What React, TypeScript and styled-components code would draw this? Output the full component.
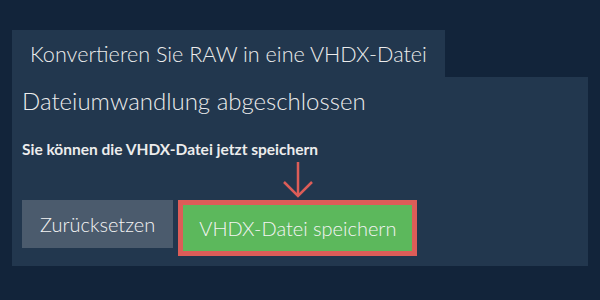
import React from "react";
import styled, { createGlobalStyle } from "styled-components";

const Global = createGlobalStyle`
  html, body {
    margin: 0;
    padding: 0;
    background: #12243a;
  }
  body {
    font-family: Lato, "Open Sans", sans-serif;
    color: #ececec;
  }
`;

const Page = styled.div`
  width: 600px;
  height: 300px;
  box-sizing: border-box;
  padding: 30px 12px 0 12px;
  background: #12243a;
`;

const Tab = styled.div`
  display: inline-flex;
  align-items: center;
  height: 47px;
  padding: 0 18px 0 18px;
  background: #22374e;
  font-size: 21.6px;
  font-weight: 300;
  color: #ececec;
  white-space: nowrap;
`;

const Panel = styled.div`
  background: #22374e;
  height: 189px;
  box-sizing: border-box;
  padding: 10px 10px 10px 10px;
  display: flex;
  flex-direction: column;
`;

const Heading = styled.h2`
  margin: 0;
  font-size: 24px;
  line-height: 28px;
  font-weight: 300;
  color: #ececec;
`;

const Note = styled.p`
  margin: 26px 0 0 0;
  font-size: 15.5px;
  line-height: 17px;
  font-weight: 700;
  color: #ececec;
`;

const Actions = styled.div`
  display: flex;
  align-items: flex-start;
  gap: 5px;
  margin-top: 42px;
`;

const Button = styled.button<{ $variant: "reset" | "save" }>`
  font-family: Lato, "Open Sans", sans-serif;
  font-size: 20px;
  font-weight: 300;
  color: #f4f4f4;
  border: ${(p) => (p.$variant === "save" ? "5px solid #dc5d58" : "none")};
  background: ${(p) => (p.$variant === "save" ? "#5cb85c" : "#4b5b6d")};
  height: ${(p) => (p.$variant === "save" ? "56px" : "48px")};
  padding: 0 ${(p) => (p.$variant === "save" ? "16px" : "18px")};
  margin: 0;
  cursor: pointer;
  white-space: nowrap;
`;

const SaveWrap = styled.div`
  position: relative;
  display: flex;
`;

const Pointer = styled.svg`
  position: absolute;
  left: 50%;
  bottom: 100%;
  margin-bottom: 2px;
  transform: translateX(-50%);
`;

export default function App() {
  return (
    <>
      <Global />
      <Page>
        <Tab>Konvertieren Sie RAW in eine VHDX-Datei</Tab>
        <Panel>
          <Heading>Dateiumwandlung abgeschlossen</Heading>
          <Note>Sie können die VHDX-Datei jetzt speichern</Note>
          <Actions>
            <Button $variant="reset">Zurücksetzen</Button>
            <SaveWrap>
              <Pointer width="32" height="36" viewBox="0 0 32 36">
                <g stroke="#dc5d58" strokeWidth="2.5" fill="none" strokeLinecap="butt">
                  <line x1="16" y1="0" x2="16" y2="34" />
                  <polyline points="2,20 16,34 30,20" />
                </g>
              </Pointer>
              <Button $variant="save">VHDX-Datei speichern</Button>
            </SaveWrap>
          </Actions>
        </Panel>
      </Page>
    </>
  );
}
